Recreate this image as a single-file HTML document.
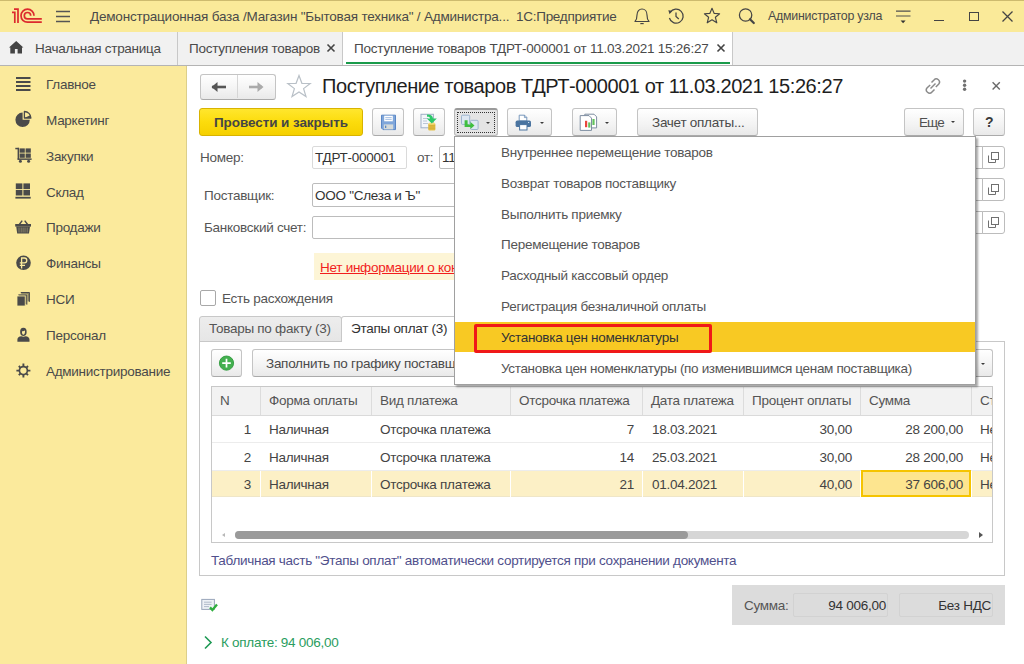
<!DOCTYPE html>
<html><head><meta charset="utf-8">
<style>
*{box-sizing:border-box;margin:0;padding:0}
html,body{width:1024px;height:664px;overflow:hidden;background:#fff;font-family:"Liberation Sans",sans-serif;font-size:13px;color:#555}
.a{position:absolute}
.t{position:absolute;white-space:nowrap;line-height:15px;font-size:13.5px;letter-spacing:-0.27px}
#titlebar{left:0;top:0;width:1024px;height:32px;background:#faea99;border-top:1px solid #cdbb6e}
#tabbar{left:0;top:32px;width:1024px;height:34px;background:#f1f1f1;border-bottom:1px solid #b4b4b4}
#sidebar{left:0;top:66px;width:187px;height:598px;background:#fbea9c;border-right:1px solid #dccf8a}
.btn{position:absolute;border:1px solid #c4c4c4;border-bottom-color:#aaa;border-radius:3px;background:linear-gradient(#fff,#f3f3f3 60%,#e9e9e9);height:27px}
.field{position:absolute;border:1px solid #bcbcbc;border-radius:2px;background:#fff;height:23px}
.tri{position:absolute;width:0;height:0;border-left:2.5px solid transparent;border-right:2.5px solid transparent;border-top:2.6px solid #3a3a3a}
.menuitem{position:absolute;left:501px;white-space:nowrap;color:#555}
.th{position:absolute;top:393px;white-space:nowrap;color:#555;font-size:13.5px;letter-spacing:-0.27px;line-height:15px}
.td{position:absolute;white-space:nowrap;color:#444;font-size:13.5px;letter-spacing:-0.27px;line-height:15px}
.vsep{position:absolute;width:1px;background:#dcdcdc}
</style></head><body>

<!-- Title bar -->
<div id="titlebar" class="a"></div>
<svg class="a" style="left:0;top:0" width="50" height="32" viewBox="0 0 50 32">
  <g fill="none" stroke="#dc2a2e" stroke-width="1.7">
    <path d="M12 12.4 H14.8 V22.9"/>
    <path d="M14 9.1 H18 V22.9"/>
    <path d="M34 15.7 A6.5 6.5 0 1 0 27.5 22.2 H41.8"/>
    <path d="M30.7 15.7 A3.2 3.2 0 1 0 27.5 18.9 H41.8"/>
  </g>
</svg>
<svg class="a" style="left:55px;top:9px" width="16" height="14" viewBox="0 0 16 14">
  <g stroke="#555" stroke-width="1.3"><path d="M1 2.5H15M1 7.5H15M1 12.5H15"/></g>
</svg>
<div class="t" style="left:90px;top:9px;color:#4a4a4a;letter-spacing:-0.2px">Демонстрационная база /Магазин "Бытовая техника" / Администра...</div>
<div class="t" style="left:516px;top:9px;color:#4a4a4a">1С:Предприятие</div>

<!-- Tab bar -->
<div id="tabbar" class="a"></div>
<div class="t" style="left:35px;top:41px;color:#4a4a4a">Начальная страница</div>
<div class="a" style="left:177px;top:32px;width:1px;height:33px;background:#c8c8c8"></div>
<div class="t" style="left:189px;top:41px;color:#4a4a4a">Поступления товаров</div>
<div class="a" style="left:342px;top:32px;width:391px;height:33px;background:#fff;border-left:1px solid #c8c8c8;border-right:1px solid #c8c8c8"></div>
<div class="a" style="left:346px;top:62px;width:384px;height:2px;background:#1a9b4b"></div>
<div class="t" style="left:354px;top:41px;color:#4a4a4a;letter-spacing:-0.23px">Поступление товаров ТДРТ-000001 от 11.03.2021 15:26:27</div>

<!-- Sidebar -->
<div id="sidebar" class="a"></div>
<div class="t" style="left:46px;top:77px;color:#4a4a4a">Главное</div>
<div class="t" style="left:46px;top:113px;color:#4a4a4a">Маркетинг</div>
<div class="t" style="left:46px;top:149px;color:#4a4a4a">Закупки</div>
<div class="t" style="left:46px;top:185px;color:#4a4a4a">Склад</div>
<div class="t" style="left:46px;top:220px;color:#4a4a4a">Продажи</div>
<div class="t" style="left:46px;top:256px;color:#4a4a4a">Финансы</div>
<div class="t" style="left:46px;top:292px;color:#4a4a4a">НСИ</div>
<div class="t" style="left:46px;top:328px;color:#4a4a4a">Персонал</div>
<div class="t" style="left:46px;top:364px;color:#4a4a4a">Администрирование</div>


<!-- title bar icons -->
<svg class="a" style="left:632px;top:6px" width="20" height="20" viewBox="0 0 20 20">
  <g fill="none" stroke="#454545" stroke-width="1.15" stroke-linejoin="round">
    <path d="M3 15.5 C5 13.5 5 11 5 9 C5 5.5 7.2 3 10 3 C12.8 3 15 5.5 15 9 C15 11 15 13.5 17 15.5 Z"/>
    <path d="M8.3 17.6 H11.7"/>
  </g>
</svg>
<svg class="a" style="left:666px;top:6px" width="20" height="20" viewBox="0 0 20 20">
  <g fill="none" stroke="#454545" stroke-width="1.25">
    <path d="M4.2 6.5 A7 7 0 1 1 3.4 12"/>
    <path d="M10 6.5 V10.5 L12.8 13"/>
  </g>
  <path d="M2.3 4.2 L6.2 4.8 L3.6 8.2 Z" fill="#454545"/>
</svg>
<svg class="a" style="left:702px;top:6px" width="20" height="20" viewBox="0 0 20 20">
  <path d="M10 2.3 L12.2 7.4 L17.6 7.8 L13.4 11.3 L14.8 16.8 L10 13.8 L5.2 16.8 L6.6 11.3 L2.4 7.8 L7.8 7.4 Z" fill="none" stroke="#454545" stroke-width="1.15" stroke-linejoin="round"/>
</svg>
<svg class="a" style="left:737px;top:6px" width="20" height="20" viewBox="0 0 20 20">
  <circle cx="8.6" cy="9" r="6.2" fill="none" stroke="#454545" stroke-width="1.25"/>
  <path d="M13 13.3 L16.8 17" stroke="#454545" stroke-width="2.2" stroke-linecap="round"/>
</svg>
<div class="t" style="left:768px;top:9px;font-size:12.4px;letter-spacing:-0.25px;color:#4a4a4a">Администратор узла</div>
<svg class="a" style="left:894px;top:8px" width="18" height="18" viewBox="0 0 18 18">
  <g stroke="#505050" stroke-width="1.2"><path d="M2 3.2H16.5M2 8H16.5"/></g>
  <path d="M6.6 12.6 H11.6 L9.1 15.2 Z" fill="#333"/>
</svg>
<div class="a" style="left:934px;top:20px;width:10px;height:1.3px;background:#444"></div>
<div class="a" style="left:969px;top:11.5px;width:9.5px;height:9.5px;border:1.2px solid #444"></div>
<svg class="a" style="left:1001px;top:10px" width="13" height="13" viewBox="0 0 13 13">
  <path d="M1.5 1.5 L11.5 11.5 M11.5 1.5 L1.5 11.5" stroke="#444" stroke-width="1.3"/>
</svg>

<!-- tab bar icons -->
<svg class="a" style="left:8px;top:40px" width="16" height="15" viewBox="0 0 16 15">
  <path d="M8.2 1 L15.4 7.6 H14 V13.4 H9.6 V9 H6.9 V13.4 H2.3 V7.6 H1 Z" fill="#444"/>
</svg>
<svg class="a" style="left:326px;top:43px" width="10" height="10" viewBox="0 0 10 10">
  <path d="M1.5 1.5 L8.5 8.5 M8.5 1.5 L1.5 8.5" stroke="#444" stroke-width="1.6"/>
</svg>
<svg class="a" style="left:716px;top:43px" width="10" height="10" viewBox="0 0 10 10">
  <path d="M1.5 1.5 L8.5 8.5 M8.5 1.5 L1.5 8.5" stroke="#444" stroke-width="1.6"/>
</svg>

<!-- sidebar icons -->
<svg class="a" style="left:16px;top:77px" width="15" height="15" viewBox="0 0 15 15">
  <g fill="#4a4a4a"><rect x="0" y="0" width="14.5" height="2"/><rect x="0" y="4" width="14.5" height="2"/><rect x="0" y="8" width="14.5" height="2"/><rect x="0" y="12" width="14.5" height="2"/></g>
</svg>
<svg class="a" style="left:0;top:105px" width="40" height="30" viewBox="0 105 40 30">
  <path d="M22.6 112.6 V119.8 H29.8 A7.2 7.2 0 1 1 22.6 112.6 Z" fill="#4a4a4a"/>
  <path d="M24.4 118 V111.5 A6.5 6.5 0 0 1 30.9 118 Z" fill="#fbea9c" stroke="#4a4a4a" stroke-width="1.3" stroke-linejoin="round"/>
  <path d="M24.4 118 L30.2 115.2 A6.5 6.5 0 0 1 30.9 118 Z" fill="#4a4a4a"/>
</svg>
<svg class="a" style="left:0;top:140px" width="40" height="30" viewBox="0 140 40 30">
  <g fill="#4a4a4a">
    <rect x="15.3" y="147.8" width="3.5" height="1.5"/>
    <rect x="17.6" y="147.8" width="1.5" height="11.8"/>
    <rect x="19.6" y="148.4" width="5.2" height="4.3"/><rect x="25.6" y="148.4" width="5.2" height="4.3"/>
    <rect x="19.6" y="153.5" width="5.2" height="4.3"/><rect x="25.6" y="153.5" width="5.2" height="4.3"/>
    <rect x="17.6" y="158.4" width="14" height="1.5"/>
    <circle cx="20.4" cy="161.3" r="1.5"/><circle cx="28.6" cy="161.3" r="1.5"/>
  </g>
</svg>
<svg class="a" style="left:0;top:180px" width="40" height="22" viewBox="0 180 40 22">
  <g fill="#4a4a4a">
    <rect x="15.8" y="183.4" width="6.6" height="5.6"/><rect x="23.4" y="183.4" width="6.6" height="5.6"/>
    <rect x="15.8" y="189.9" width="6.6" height="5.6"/><rect x="23.4" y="189.9" width="6.6" height="5.6"/>
    <rect x="15.4" y="196.8" width="15.3" height="1.8"/>
  </g>
</svg>
<svg class="a" style="left:0;top:215px" width="40" height="25" viewBox="0 215 40 25">
  <path d="M19.3 224.5 L22.2 220.6 M27.6 224.5 L24.7 220.6" stroke="#4a4a4a" stroke-width="1.4" fill="none"/>
  <rect x="15.2" y="224" width="15.8" height="2.6" fill="#4a4a4a"/>
  <path d="M16.2 226.4 H30 L29 233.6 H17.2 Z" fill="#4a4a4a"/>
  <g stroke="#9a9270" stroke-width="0.8"><path d="M19 227.5V232.5M21.2 227.5V232.5M23.1 227.5V232.5M25 227.5V232.5M27.2 227.5V232.5"/></g>
</svg>
<svg class="a" style="left:0;top:250px" width="40" height="25" viewBox="0 250 40 25">
  <circle cx="23.5" cy="262.8" r="7.3" fill="#4a4a4a"/>
  <path d="M21.6 268.6 V258 H24.4 A2.4 2.4 0 0 1 24.4 262.8 H19.8 M19.8 265.4 H25" fill="none" stroke="#fbea9c" stroke-width="1.3"/>
</svg>
<svg class="a" style="left:10px;top:286px" width="26" height="24" viewBox="10 286 26 24">
  <path d="M20.8 292 H29.3 A0.6 0.6 0 0 1 29.9 292.6 V301.8 H20.8 Z" fill="#8c8660" stroke="#fbea9c" stroke-width="0.7"/>
  <path d="M20.8 292.5 H29.4 V301.8" fill="none" stroke="#4a4a4a" stroke-width="1"/>
  <path d="M18.4 294.4 H27.2 V304.6 H18.4 Z" fill="#8c8660" stroke="#fbea9c" stroke-width="0.8"/>
  <path d="M18.4 294.9 H26.8 V304.6" fill="none" stroke="#4a4a4a" stroke-width="1"/>
  <rect x="17" y="296" width="8.2" height="10" fill="#4a4a4a" stroke="#fbea9c" stroke-width="0.8"/>
</svg>
<svg class="a" style="left:10px;top:322px" width="26" height="24" viewBox="10 322 26 24">
  <path d="M20.2 333 C19.8 329.5 21 327.8 23.4 327.8 C25.8 327.8 27 329.5 26.6 333 C26.4 334.8 25 336 23.4 336 C21.8 336 20.4 334.8 20.2 333 Z" fill="#4a4a4a"/>
  <path d="M22 331.2 C23 331.6 24 331.2 25 330.6 C25.2 332.8 24.6 334.8 23.5 334.8 C22.4 334.8 21.8 333.2 22 331.2 Z" fill="#fbea9c"/>
  <path d="M17.4 341.8 V339.6 C17.4 337.4 19 336.4 21.2 336.2 L23.4 336.8 L25.6 336.2 C27.8 336.4 29.5 337.4 29.5 339.6 V341.8 Z" fill="#4a4a4a"/>
</svg>
<svg class="a" style="left:10px;top:358px" width="26" height="26" viewBox="10 358 26 26">
  <circle cx="23.4" cy="370.6" r="4" fill="none" stroke="#4a4a4a" stroke-width="1.7"/>
  <path d="M23.40 366.30 L23.40 363.60 M26.44 367.56 L28.00 366.00 M27.70 370.60 L30.40 370.60 M26.44 373.64 L28.00 375.20 M23.40 374.90 L23.40 377.60 M20.36 373.64 L18.80 375.20 M19.10 370.60 L16.40 370.60 M20.36 367.56 L18.80 366.00 " stroke="#4a4a4a" stroke-width="1.9"/>
</svg>

<!-- Form header -->
<div class="t" style="left:322px;top:75px;font-size:20px;line-height:22px;letter-spacing:-0.42px;color:#1e1e1e">Поступление товаров ТДРТ-000001 от 11.03.2021 15:26:27</div>


<!-- nav buttons -->
<div class="btn" style="left:199.5px;top:74px;width:76.5px;height:25.5px;border-radius:3px"></div>
<div class="a" style="left:237px;top:75px;width:1px;height:23px;background:#d6d6d6"></div>
<svg class="a" style="left:210px;top:80px" width="18" height="14" viewBox="0 0 18 14">
  <path d="M2 7 H16" stroke="#555" stroke-width="2.6"/>
  <path d="M1.5 7 L7.5 2 V12 Z" fill="#555"/>
</svg>
<svg class="a" style="left:247px;top:80px" width="18" height="14" viewBox="0 0 18 14">
  <path d="M2 7 H15" stroke="#aaa" stroke-width="2.6"/>
  <path d="M16.5 7 L10.5 2 V12 Z" fill="#aaa"/>
</svg>
<svg class="a" style="left:286px;top:74px" width="26" height="25" viewBox="0 0 26 25">
  <path d="M13 1.5 L15.9 9.3 L24.2 9.5 L17.6 14.6 L20 22.6 L13 17.9 L6 22.6 L8.4 14.6 L1.8 9.5 L10.1 9.3 Z" fill="none" stroke="#b9c0c7" stroke-width="1.2" stroke-linejoin="miter"/>
</svg>
<!-- header right icons -->
<svg class="a" style="left:924px;top:77px" width="18" height="18" viewBox="0 0 18 18">
  <g fill="none" stroke="#8a8a8a" stroke-width="1.5">
    <path d="M7.5 5.5 L10 3 A2.6 2.6 0 0 1 14.6 7.2 L11.8 10"/>
    <path d="M10.5 12.5 L8 15 A2.6 2.6 0 0 1 3.2 10.8 L6.2 8"/>
    <path d="M6.5 11.5 L11.5 6.5"/>
  </g>
</svg>
<svg class="a" style="left:958px;top:76px" width="14" height="18" viewBox="958 76 14 18"><g fill="#707070"><circle cx="964.6" cy="81.1" r="1.7"/><circle cx="964.6" cy="85.2" r="1.7"/><circle cx="964.6" cy="89.3" r="1.7"/></g></svg>
<svg class="a" style="left:988px;top:78px" width="16" height="16" viewBox="988 78 16 16"><path d="M992.6 82.3 L999.8 89.5 M999.8 82.3 L992.6 89.5" stroke="#6a6a6a" stroke-width="1.4"/></svg>

<!-- toolbar -->
<div class="a" style="left:199px;top:108px;width:164px;height:28px;border:1px solid #d8b300;border-radius:3px;background:linear-gradient(#ffe62e,#fcdc0c 50%,#f5d000)"></div>
<div class="t" style="left:214px;top:115px;font-weight:bold;color:#454545;letter-spacing:-0.08px">Провести и закрыть</div>
<div class="btn" style="left:372px;top:108px;width:32px;height:28px"></div>
<svg class="a" style="left:375px;top:110px" width="26" height="24" viewBox="375 110 26 24">
  <path d="M381.5 115.2 H395.5 V129.6 H383 L381.5 128.1 Z" fill="#7fa6da" stroke="#5a87c6" stroke-width="1"/>
  <rect x="384.2" y="115.7" width="8.6" height="5.6" fill="#fff"/>
  <path d="M385.3 117.6H391.7M385.3 119.4H391.7" stroke="#8fb0dc" stroke-width="0.8"/>
  <rect x="383.8" y="124.4" width="9.4" height="5" fill="#d5dad9"/>
  <rect x="385" y="125.6" width="1.3" height="2.4" fill="#5a87c6"/>
</svg>
<div class="btn" style="left:413px;top:108px;width:32px;height:28px"></div>
<svg class="a" style="left:415px;top:110px" width="28" height="24" viewBox="415 110 28 24">
  <rect x="421" y="114.3" width="12.4" height="13.5" fill="#f3f6fa" stroke="#9fb0c6" stroke-width="1"/>
  <path d="M423 118.5H428M423 121H427M423 123.5H428" stroke="#b5c2d3" stroke-width="0.9"/>
  <g fill="#e6c248"><rect x="428.3" y="123.5" width="7" height="7" rx="1"/></g>
  <path d="M428.3 125.2H435.3M428.3 127H435.3M428.3 128.8H435.3" stroke="#c9a22c" stroke-width="0.7"/>
  <ellipse cx="431.8" cy="123.6" rx="3.5" ry="1.2" fill="#f5dc7c"/>
  <path d="M427 114.6 C430.5 114.4 432.8 115.6 433 118.6 H436.8 L431.8 123.6 L426.8 118.6 H430 C430 117.2 429 116.6 427 116.8 Z" fill="#2cc869"/>
</svg>
<div class="a" style="left:454px;top:108px;width:44px;height:28px;border:1px solid #b8b8b8;border-top:2px solid #9a9a9a;border-radius:3px;background:#e4e4e4"></div>
<div class="a" style="left:457px;top:111.5px;width:38px;height:21px;border:1px dotted #333"></div>
<svg class="a" style="left:455px;top:110px" width="30" height="24" viewBox="455 110 30 24">
  <rect x="461.5" y="115.2" width="8.2" height="9.2" rx="1" fill="#dde7f2" stroke="#9db4cf" stroke-width="1"/>
  <rect x="470.5" y="120.3" width="7.6" height="9.2" rx="1" fill="#dde7f2" stroke="#9db4cf" stroke-width="1"/>
  <path d="M464.6 120.3 H467.6 V124.4 H470.5 V122 L474.5 125.6 L470.5 129 V126.9 H464.6 Z" fill="#3fbf3f"/>
</svg>
<div class="tri" style="left:486px;top:121.5px"></div>
<div class="btn" style="left:507px;top:108px;width:45px;height:28px"></div>
<svg class="a" style="left:512px;top:112px" width="24" height="22" viewBox="512 112 24 22">
  <path d="M519.2 121 V115.2 H524.6 L526.8 117.4 V121 Z" fill="#fff" stroke="#6a8db5" stroke-width="0.9"/>
  <path d="M524.4 115.2 V117.6 H526.8" fill="none" stroke="#6a8db5" stroke-width="0.8"/>
  <rect x="515.6" y="120.6" width="15.4" height="6.4" rx="1.6" fill="#4a74a0"/>
  <rect x="519.6" y="124.6" width="7.4" height="5.4" fill="#fff" stroke="#4a74a0" stroke-width="1"/>
  <rect x="528" y="122" width="1.2" height="1" fill="#cfe0f0"/>
</svg>
<div class="tri" style="left:539.5px;top:121.5px"></div>
<div class="btn" style="left:572px;top:108px;width:45px;height:28px"></div>
<svg class="a" style="left:576px;top:110px" width="26" height="24" viewBox="576 110 26 24">
  <path d="M584.8 114.2 H594 L596.6 116.8 V127.9 H584.8 Z" fill="#fff" stroke="#7d8da0" stroke-width="1"/>
  <path d="M580.2 115.6 H589 L591.5 118.1 V130.4 H580.2 Z" fill="#fff" stroke="#7d8da0" stroke-width="1"/>
  <rect x="585" y="120.8" width="2.2" height="6.4" fill="#e8473d"/>
  <rect x="588.2" y="122.4" width="2.2" height="5.2" fill="#63c35c"/>
  <rect x="592.4" y="119" width="2.2" height="6" fill="#63c35c"/>
</svg>
<div class="tri" style="left:604.5px;top:121.5px"></div>
<div class="btn" style="left:637px;top:108px;width:121px;height:28px"></div>
<div class="t" style="left:652px;top:115px;color:#4a4a4a">Зачет оплаты...</div>
<div class="btn" style="left:904px;top:108px;width:60px;height:28px"></div>
<div class="t" style="left:919px;top:115px;color:#4f4f4f;letter-spacing:-0.9px">Еще</div>
<div class="tri" style="left:951px;top:121px"></div>
<div class="btn" style="left:973px;top:108px;width:32px;height:28px"></div>
<div class="t" style="left:985px;top:115px;font-weight:bold;font-size:14px;color:#3a3a3a;letter-spacing:0">?</div>

<!-- fields -->
<div class="t" style="left:200px;top:150px">Номер:</div>
<div class="field" style="left:312px;top:146px;width:95px;height:23px;border-color:#dadada"></div>
<div class="t" style="left:315px;top:150px;color:#333">ТДРТ-000001</div>
<div class="t" style="left:417px;top:150px">от:</div>
<div class="field" style="left:439px;top:146px;width:100px;height:23px"></div>
<div class="t" style="left:442px;top:150px;color:#333">11.03.2021 15:26:27</div>
<div class="t" style="left:204px;top:188px">Поставщик:</div>
<div class="field" style="left:312px;top:183px;width:300px;height:24px"></div>
<div class="t" style="left:315px;top:188px;color:#333">ООО "Слеза и Ъ"</div>
<div class="t" style="left:204px;top:220px">Банковский счет:</div>
<div class="field" style="left:312px;top:216px;width:300px;height:23px"></div>
<!-- right column fields -->
<div class="field" style="left:900px;top:146px;width:83px;height:23px;border-radius:0"></div>
<div class="field" style="left:982px;top:146px;width:23px;height:23px;border-radius:0 3px 3px 0"></div>
<div class="field" style="left:900px;top:178px;width:83px;height:23px;border-radius:0"></div>
<div class="field" style="left:982px;top:178px;width:23px;height:23px;border-radius:0 3px 3px 0"></div>
<div class="field" style="left:900px;top:211px;width:83px;height:23px;border-radius:0"></div>
<div class="field" style="left:982px;top:211px;width:23px;height:23px;border-radius:0 3px 3px 0"></div>
<svg class="a" style="left:988px;top:152px" width="11" height="11" viewBox="0 0 11 11"><g fill="none" stroke="#707070" stroke-width="1"><rect x="3.5" y="0.5" width="7" height="7" fill="#fff"/><path d="M0.5 3.5 V10.5 H7.5 V8"/></g></svg>
<svg class="a" style="left:988px;top:184px" width="11" height="11" viewBox="0 0 11 11"><g fill="none" stroke="#707070" stroke-width="1"><rect x="3.5" y="0.5" width="7" height="7" fill="#fff"/><path d="M0.5 3.5 V10.5 H7.5 V8"/></g></svg>
<svg class="a" style="left:988px;top:217px" width="11" height="11" viewBox="0 0 11 11"><g fill="none" stroke="#707070" stroke-width="1"><rect x="3.5" y="0.5" width="7" height="7" fill="#fff"/><path d="M0.5 3.5 V10.5 H7.5 V8"/></g></svg>

<div class="a" style="left:314px;top:253px;width:200px;height:27px;background:#fdf5d6"></div>
<div class="t" style="left:320px;top:259.6px;color:#f21d1d;text-decoration:underline">Нет информации о контрагенте</div>
<div class="a" style="left:200px;top:290px;width:16px;height:16px;border:1px solid #a8a8a8;border-radius:2px;background:#fff"></div>
<div class="t" style="left:222px;top:291px">Есть расхождения</div>

<!-- tabs -->
<div class="a" style="left:199px;top:341px;width:806px;height:235px;border:1px solid #c8c8c8"></div>
<div class="a" style="left:199px;top:316px;width:143px;height:26px;border:1px solid #c8c8c8;border-radius:3px 3px 0 0;background:linear-gradient(#ededed,#e6e6e6)"></div>
<div class="a" style="left:341px;top:316px;width:120px;height:26px;border:1px solid #c8c8c8;border-bottom:none;border-radius:3px 3px 0 0;background:#fff"></div>
<div class="t" style="left:209px;top:321px">Товары по факту (3)</div>
<div class="t" style="left:351px;top:321px;color:#333">Этапы оплат (3)</div>

<!-- table command bar -->
<div class="btn" style="left:211px;top:349px;width:31px;height:28px"></div>
<svg class="a" style="left:216px;top:353px" width="22" height="22" viewBox="216 353 22 22">
  <circle cx="226.5" cy="363.1" r="7.1" fill="#43b04f" stroke="#2f9a3c" stroke-width="0.9"/>
  <path d="M226.5 358.8 V367.4 M222.2 363.1 H230.8" stroke="#fff" stroke-width="1.7"/>
</svg>
<div class="btn" style="left:252px;top:349px;width:741px;height:28px"></div>
<div class="t" style="left:266px;top:356px;color:#4a4a4a">Заполнить по графику поставщика</div>
<div class="tri" style="left:981px;top:363px"></div>

<!-- table -->
<div class="a" style="left:211px;top:386px;width:782px;height:157px;border:1px solid #c8c8c8;background:#fff"></div>
<div class="a" style="left:212px;top:387px;width:780px;height:29px;background:#f2f2f2;border-bottom:1px solid #dadada"></div>
<div class="vsep" style="left:260px;top:387px;height:28px;background:#dcdcdc"></div>
<div class="vsep" style="left:371px;top:387px;height:28px;background:#dcdcdc"></div>
<div class="vsep" style="left:510px;top:387px;height:28px;background:#dcdcdc"></div>
<div class="vsep" style="left:642px;top:387px;height:28px;background:#dcdcdc"></div>
<div class="vsep" style="left:743px;top:387px;height:28px;background:#dcdcdc"></div>
<div class="vsep" style="left:860px;top:387px;height:28px;background:#dcdcdc"></div>
<div class="vsep" style="left:971px;top:387px;height:28px;background:#dcdcdc"></div>

<div class="th" style="left:220px">N</div>
<div class="th" style="left:269px">Форма оплаты</div>
<div class="th" style="left:380px">Вид платежа</div>
<div class="th" style="left:519px">Отсрочка платежа</div>
<div class="th" style="left:651px">Дата платежа</div>
<div class="th" style="left:752px">Процент оплаты</div>
<div class="th" style="left:869px">Сумма</div>
<div class="th" style="left:980px;width:12px;overflow:hidden">Статус</div>
<div class="a" style="left:212px;top:442px;width:780px;height:1px;background:#ececec"></div>
<div class="a" style="left:212px;top:470px;width:780px;height:27px;background:#fcf0c6;border-top:1px solid #ececec;border-bottom:1px solid #efe6c8"></div>
<div class="vsep" style="left:260px;top:471px;height:26px;background:#fff"></div>
<div class="vsep" style="left:371px;top:471px;height:26px;background:#fff"></div>
<div class="vsep" style="left:510px;top:471px;height:26px;background:#fff"></div>
<div class="vsep" style="left:642px;top:471px;height:26px;background:#fff"></div>
<div class="vsep" style="left:743px;top:471px;height:26px;background:#fff"></div>
<div class="vsep" style="left:860px;top:471px;height:26px;background:#fff"></div>
<div class="vsep" style="left:971px;top:471px;height:26px;background:#fff"></div>

<div class="a" style="left:861px;top:470px;width:110px;height:27px;border:2px solid #f5c400;background:#fde58f"></div>
<div class="td" style="left:200px;top:422px;width:51px;text-align:right">1</div>
<div class="td" style="left:269px;top:422px">Наличная</div>
<div class="td" style="left:380px;top:422px">Отсрочка платежа</div>
<div class="td" style="left:540px;top:422px;width:94px;text-align:right">7</div>
<div class="td" style="left:652px;top:422px">18.03.2021</div>
<div class="td" style="left:760px;top:422px;width:92px;text-align:right">30,00</div>
<div class="td" style="left:860px;top:422px;width:103px;text-align:right">28 200,00</div>
<div class="td" style="left:980px;top:422px;width:12px;overflow:hidden">Не</div>
<div class="td" style="left:200px;top:450px;width:51px;text-align:right">2</div>
<div class="td" style="left:269px;top:450px">Наличная</div>
<div class="td" style="left:380px;top:450px">Отсрочка платежа</div>
<div class="td" style="left:540px;top:450px;width:94px;text-align:right">14</div>
<div class="td" style="left:652px;top:450px">25.03.2021</div>
<div class="td" style="left:760px;top:450px;width:92px;text-align:right">30,00</div>
<div class="td" style="left:860px;top:450px;width:103px;text-align:right">28 200,00</div>
<div class="td" style="left:980px;top:450px;width:12px;overflow:hidden">Не</div>
<div class="td" style="left:200px;top:477px;width:51px;text-align:right">3</div>
<div class="td" style="left:269px;top:477px">Наличная</div>
<div class="td" style="left:380px;top:477px">Отсрочка платежа</div>
<div class="td" style="left:540px;top:477px;width:94px;text-align:right">21</div>
<div class="td" style="left:652px;top:477px">01.04.2021</div>
<div class="td" style="left:760px;top:477px;width:92px;text-align:right">40,00</div>
<div class="td" style="left:860px;top:477px;width:103px;text-align:right">37 606,00</div>
<div class="td" style="left:980px;top:477px;width:12px;overflow:hidden">Не</div>

<!-- scrollbar -->
<div class="a" style="left:235px;top:531px;width:734px;height:8px;border-radius:4px;background:#d6d6d6"></div>
<div class="a" style="left:235px;top:531px;width:453px;height:8px;border-radius:4px;background:#9a9a9a"></div>
<div class="a" style="left:222px;top:532.5px;width:0;height:0;border-top:2.5px solid transparent;border-bottom:2.5px solid transparent;border-right:3px solid #b8b8b8"></div>
<div class="a" style="left:979px;top:532px;width:0;height:0;border-top:3px solid transparent;border-bottom:3px solid transparent;border-left:4px solid #555"></div>

<div class="t" style="left:211px;top:553px;color:#50508c;letter-spacing:-0.29px">Табличная часть "Этапы оплат" автоматически сортируется при сохранении документа</div>

<!-- bottom -->
<svg class="a" style="left:198px;top:595px" width="24" height="20" viewBox="198 595 24 20">
  <rect x="201.8" y="599.4" width="12.6" height="10" fill="#eef1f6" stroke="#9aa6ba" stroke-width="1"/>
  <path d="M204 602.2H211.6M204 604.4H211.6M204 606.6H209" stroke="#a9b3c4" stroke-width="0.9"/>
  <path d="M210 607.4 L212.4 610 L217 604.6" fill="none" stroke="#2fae3e" stroke-width="2.3"/>
</svg>
<div class="a" style="left:732px;top:585px;width:273px;height:40px;background:#dcdcdc"></div>
<div class="t" style="left:744px;top:598px">Сумма:</div>
<div class="a" style="left:793px;top:593px;width:95px;height:24px;border:1px solid #d2d2d2;border-radius:2px"></div>
<div class="t" style="left:793px;top:598px;width:93px;text-align:right;color:#333">94 006,00</div>
<div class="a" style="left:899px;top:593px;width:94px;height:24px;border:1px solid #d2d2d2;border-radius:2px"></div>
<div class="t" style="left:899px;top:598px;width:92px;text-align:right;color:#333">Без НДС</div>
<svg class="a" style="left:203px;top:635px" width="10" height="15" viewBox="0 0 10 15">
  <path d="M2 1.5 L8 7.5 L2 13.5" fill="none" stroke="#1f9a55" stroke-width="1.6"/>
</svg>
<div class="t" style="left:221px;top:635px;color:#2a9d60">К оплате: 94 006,00</div>

<!-- popup menu -->
<div class="a" style="left:454px;top:136px;width:522px;height:249px;background:#fff;border:1px solid #a0a0a0;box-shadow:2px 2px 2px rgba(0,0,0,0.35)"></div>
<div class="a" style="left:455px;top:322px;width:520px;height:30px;background:#f8c923"></div>
<div class="a" style="left:474px;top:324px;width:238px;height:29px;border:3px solid #f01818;border-radius:2px"></div>
<div class="menuitem t" style="top:145.0px;color:#555">Внутреннее перемещение товаров</div>
<div class="menuitem t" style="top:175.8px;color:#555">Возврат товаров поставщику</div>
<div class="menuitem t" style="top:206.6px;color:#555">Выполнить приемку</div>
<div class="menuitem t" style="top:237.4px;color:#555">Перемещение товаров</div>
<div class="menuitem t" style="top:268.2px;color:#555">Расходный кассовый ордер</div>
<div class="menuitem t" style="top:299.0px;color:#555">Регистрация безналичной оплаты</div>
<div class="menuitem t" style="top:329.8px;color:#333">Установка цен номенклатуры</div>
<div class="menuitem t" style="top:360.6px;color:#555;letter-spacing:-0.34px">Установка цен номенклатуры (по изменившимся ценам поставщика)</div>

</body></html>
